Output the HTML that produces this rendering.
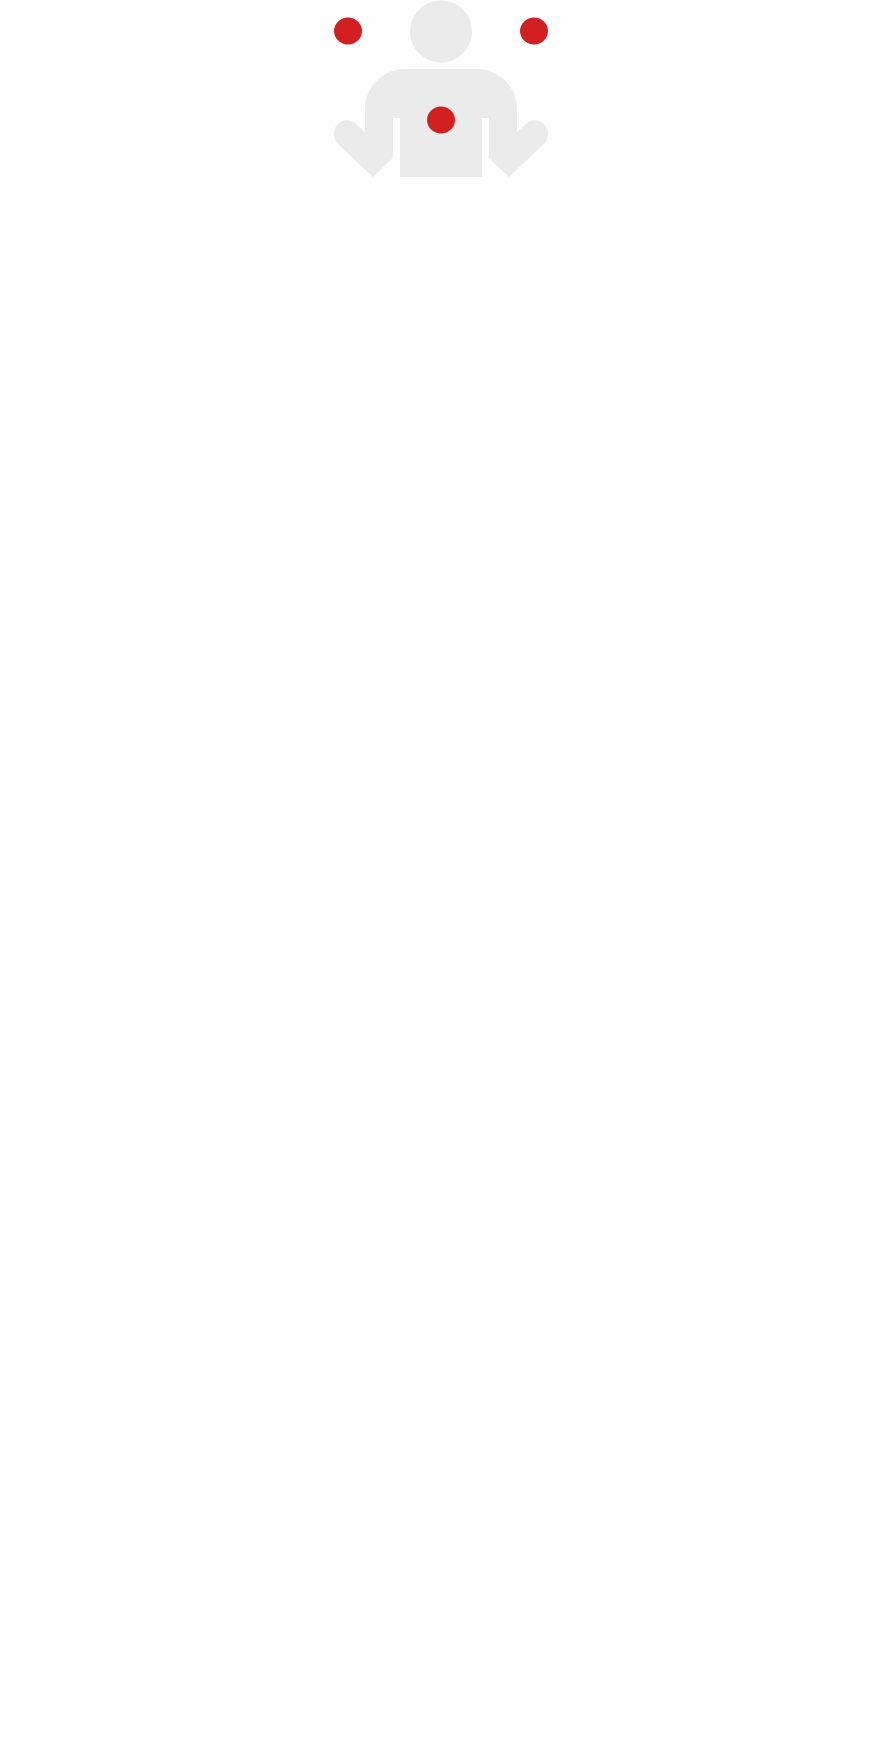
<!DOCTYPE html>
<html><head><meta charset="utf-8"><style>
html,body{margin:0;padding:0;background:#fefefe;width:888px;height:1761px;overflow:hidden}
svg{position:absolute;left:0;top:0}
</style></head><body>
<svg width="888" height="200" viewBox="0 0 888 200">
<circle cx="441" cy="31.5" r="31" fill="#ebebeb"/>
<path fill="#ebebeb" d="M400,177 L400,118 L393,118 L393,158 L373,177 L338,144 C332,138 333,129 338,124 C343,119 351,119 356,124 L365,132 L365,109 C365,87 383,69 405,69 L477,69 C499,69 517,87 517,109 L517,132 L526,124 C531,119 539,119 544,124 C549,129 550,138 544,144 L509,177 L489,158 L489,118 L482,118 L482,177 Z"/>
<ellipse cx="348" cy="31" rx="14" ry="13.5" fill="#d31f1f"/>
<ellipse cx="534" cy="31" rx="14" ry="13.5" fill="#d31f1f"/>
<ellipse cx="441" cy="120" rx="14" ry="13.5" fill="#d31f1f"/>
</svg>
</body></html>
